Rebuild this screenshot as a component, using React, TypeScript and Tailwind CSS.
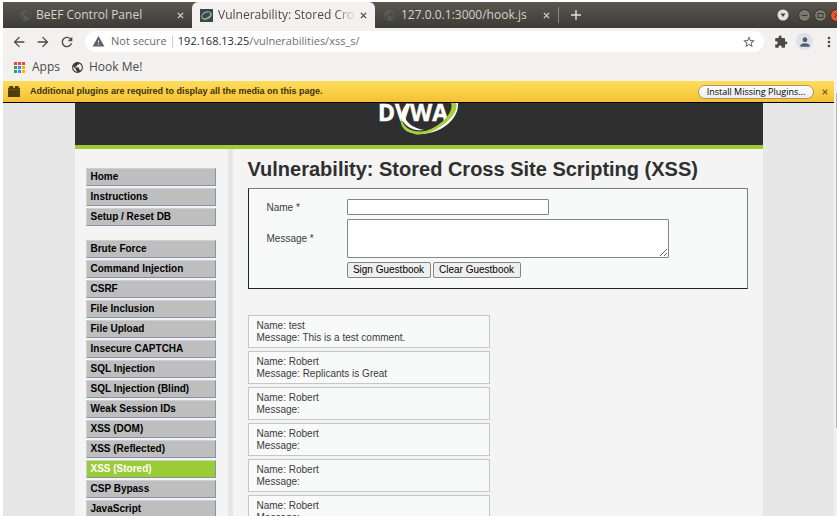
import React from "react";
import { MdArrowBack, MdArrowForward, MdRefresh, MdWarning, MdStarBorder, MdExtension, MdPerson, MdMoreVert, MdPublic } from "react-icons/md";

const menuTop = ["Home", "Instructions", "Setup / Reset DB"];
const menuMain = [
  "Brute Force",
  "Command Injection",
  "CSRF",
  "File Inclusion",
  "File Upload",
  "Insecure CAPTCHA",
  "SQL Injection",
  "SQL Injection (Blind)",
  "Weak Session IDs",
  "XSS (DOM)",
  "XSS (Reflected)",
  "XSS (Stored)",
  "CSP Bypass",
  "JavaScript",
];

const entries = [
  { name: "test", message: "This is a test comment." },
  { name: "Robert", message: "Replicants is Great" },
  { name: "Robert", message: "" },
  { name: "Robert", message: "" },
  { name: "Robert", message: "" },
  { name: "Robert", message: "" },
];

function CloseIcon({ className }: { className: string }) {
  return (
    <svg viewBox="0 0 8 8" className={className} fill="none" stroke="currentColor" strokeWidth="1.5">
      <path d="M1 1l6 6M7 1L1 7" />
    </svg>
  );
}

function TabClose({ label }: { label: string }) {
  return (
    <button type="button" aria-label={label} className="shrink-0">
      <CloseIcon className="size-[7px]" />
    </button>
  );
}

function TabBar() {
  return (
    <div className="flex h-[26px] shrink-0 items-stretch overflow-hidden bg-linear-to-b from-[#59574e] to-[#3d3b36] text-xs text-[#d6d3cc]">
      <div className="flex w-[189px] shrink-0 items-center gap-1 pr-2 pl-4">
        <MdPublic className="size-[13px] shrink-0 text-[#555b62]" />
        <span className="flex-1 truncate">BeEF Control Panel</span>
        <TabClose label="Close BeEF Control Panel" />
      </div>
      <div className="flex w-[183px] shrink-0 items-center gap-1 rounded-t-md bg-[#f2f1f0] pr-2 pl-2 text-[#4a4a4a]">
        <svg viewBox="0 0 12 12" className="size-[13px] shrink-0">
          <rect width="12" height="12" fill="#3c4650" />
          <ellipse cx="6" cy="6" rx="4.6" ry="3" fill="none" stroke="#a9b7a0" strokeWidth="1" transform="rotate(-25 6 6)" />
          <path d="M2 8.5C4 10 9 8.5 10.3 4" fill="none" stroke="#8fbf3a" strokeWidth="1" />
        </svg>
        <span className="min-w-0 flex-1 overflow-hidden mask-r-from-85% pl-px whitespace-nowrap">Vulnerability: Stored Cros</span>
        <TabClose label="Close Vulnerability" />
      </div>
      <div className="flex w-[183px] shrink-0 items-center gap-1 pr-2 pl-2">
        <MdPublic className="size-[13px] shrink-0 text-[#555b62]" />
        <span className="flex-1 truncate pl-px">127.0.0.1:3000/hook.js</span>
        <TabClose label="Close hook.js" />
      </div>
      <div className="flex min-w-0 flex-1 items-center">
        <div className="h-4 w-px bg-[#8b8980]" />
        <button type="button" aria-label="New tab" className="ml-3">
          <svg viewBox="0 0 10 10" className="size-[10px]" stroke="#e4e2dc" strokeWidth="1.4">
            <path d="M5 0v10M0 5h10" />
          </svg>
        </button>
        <div className="-mr-[6px] ml-auto flex items-center gap-[3px]">
          <button type="button" aria-label="Search tabs" className="mr-[6px]">
            <svg viewBox="0 0 12 12" className="size-3">
              <circle cx="6" cy="6" r="5.5" fill="#e4e1da" />
              <path d="M3.5 4.5h5L6 8z" fill="#45433d" />
            </svg>
          </button>
          <button type="button" aria-label="Minimize">
            <svg viewBox="0 0 13 13" className="size-[13px]">
              <circle cx="6.5" cy="6.5" r="6" fill="#7b796f" stroke="#33312c" />
              <path d="M3.5 6.5h6" stroke="#3b3934" />
            </svg>
          </button>
          <button type="button" aria-label="Maximize">
            <svg viewBox="0 0 13 13" className="size-[13px]">
              <circle cx="6.5" cy="6.5" r="6" fill="#7b796f" stroke="#33312c" />
              <rect x="4" y="4.5" width="5" height="4" fill="none" stroke="#3b3934" />
            </svg>
          </button>
          <button type="button" aria-label="Close window">
            <svg viewBox="0 0 13 13" className="size-[13px]">
              <circle cx="6.5" cy="6.5" r="6" fill="#e8582c" stroke="#33312c" />
              <path d="M4.5 4.5l4 4M8.5 4.5l-4 4" stroke="#5e1f0c" />
            </svg>
          </button>
        </div>
      </div>
    </div>
  );
}

function Toolbar() {
  return (
    <div className="flex h-[27px] shrink-0 items-center overflow-hidden pl-2 text-[#4a4a4a]">
      <button type="button" aria-label="Back"><MdArrowBack className="size-4" /></button>
      <button type="button" aria-label="Forward" className="ml-2"><MdArrowForward className="size-4" /></button>
      <button type="button" aria-label="Reload" className="ml-2"><MdRefresh className="size-4" /></button>
      <form className="ml-[10px] flex h-[21px] min-w-0 flex-1 items-center rounded-full bg-white pr-2 pl-[7px] text-[11px]">
        <MdWarning className="size-[13px] shrink-0 text-[#5f6368]" />
        <span className="ml-[6px] shrink-0 text-[#6b6b6b]">Not secure</span>
        <span className="mx-[5px] h-3 w-px shrink-0 bg-[#cfcfcf]" />
        <div className="relative min-w-0 flex-1">
          <input
            aria-label="Address"
            defaultValue="192.168.13.25/vulnerabilities/xss_s/"
            className="block w-full bg-transparent text-[#707070] outline-none"
          />
          <span aria-hidden="true" className="pointer-events-none absolute inset-y-0 left-0 bg-white text-[#2b2b2b]">192.168.13.25</span>
        </div>
        <button type="button" aria-label="Bookmark this page"><MdStarBorder className="size-[14px] text-[#5f6368]" /></button>
      </form>
      <button type="button" aria-label="Extensions" className="ml-[10px]"><MdExtension className="size-[14px]" /></button>
      <button type="button" aria-label="Profile" className="ml-2 flex size-[17px] items-center justify-center rounded-full bg-[#dde1e8]">
        <MdPerson className="size-[14px] text-[#505d75]" />
      </button>
      <button type="button" aria-label="Menu" className="ml-2"><MdMoreVert className="size-4" /></button>
    </div>
  );
}

function AppsIcon() {
  const colors = ["#e8453c", "#e8453c", "#e8453c", "#2fa24f", "#4285f4", "#f5b400", "#2fa24f", "#4285f4", "#f5b400"];
  return (
    <svg viewBox="0 0 11 11" className="size-[11px]">
      {colors.map((c, i) => (
        <rect key={i} x={(i % 3) * 4} y={Math.floor(i / 3) * 4} width="3" height="3" fill={c} />
      ))}
    </svg>
  );
}

function PluginBar() {
  return (
    <div className="flex h-[22px] shrink-0 items-center border-b border-black bg-linear-to-b from-[#fede5a] to-[#f5c034] pr-[6px] pl-[5px]">
      <svg viewBox="0 0 13 12" className="h-[11px] w-3 shrink-0">
        <path d="M1.5 0h4v2h2V0h4v2H13v10H0V2h1.5z" fill="#4f3d10" />
        <path d="M0 4h13" stroke="#8a6d1c" strokeWidth=".6" />
      </svg>
      <p className="ml-[10px] flex-1 truncate font-['Liberation_Sans',sans-serif] text-[9px] font-bold text-[#3d3108]">
        Additional plugins are required to display all the media on this page.
      </p>
      <button type="button" className="h-[14px] w-[116px] shrink-0 rounded-full border border-[#a99868] bg-linear-to-b from-white to-[#ebebeb] text-[9px] leading-3 text-black">
        Install Missing Plugins...
      </button>
      <button type="button" aria-label="Dismiss" className="ml-2 text-[#7a611c]"><CloseIcon className="size-[6px]" /></button>
    </div>
  );
}

function Logo() {
  return (
    <svg viewBox="0 0 84 42" className="h-[42px] w-[84px]" role="img" aria-label="DVWA">
      <path d="M81 3C80 18 62 33 37 31C60 28 74 15 77 0H81z" fill="#fff" />
      <path d="M31 0C24 11 27 23 47 27C34 29 22 20 25 9C26 5 28 2 31 0z" fill="#fff" />
      <text x="1" y="18" fill="#fff" stroke="#fff" strokeWidth=".5" className="font-['Liberation_Sans_Narrow','Open_Sans',sans-serif] text-[23px] font-bold">DVWA</text>
      <path d="M24 15C21 30 42 36 58 27C73 19 82 8 79 0H74C77 8 67 20 54 26C39 32 27 27 24 15z" fill="#a6cf3c" />
    </svg>
  );
}

function MenuItem({ label }: { label: string }) {
  const active = label === "XSS (Stored)";
  return (
    <li>
      <a
        href="#"
        className={
          "block h-[18px] border border-t-[#ccd0d6] border-r-[#8790a4] border-b-[#8790a4] border-l-[#ccd0d6] pl-1 leading-4 font-bold " +
          (active ? "bg-[#9acc33] text-white" : "bg-[#bebebe] text-black")
        }
      >
        {label}
      </a>
    </li>
  );
}

export default function App() {
  return (
    <div className="flex h-screen flex-col overflow-hidden bg-white pt-[2px] pl-[3px] font-['Open_Sans','Noto_Sans',sans-serif]">
      <TabBar />
      <div className="shrink-0 bg-[#f2f1f0]">
        <Toolbar />
        <nav className="flex h-[26px] items-center pb-[2px] pl-[11px] text-xs text-[#4a4a4a]">
          <a href="#" className="flex items-center gap-[7px]"><AppsIcon />Apps</a>
          <a href="#" className="ml-[11px] flex items-center gap-[5px]"><MdPublic className="size-[13px] text-[#3c3c3c]" />Hook Me!</a>
        </nav>
      </div>
      <div className="flex min-h-0 flex-1">
        <div className="flex min-w-0 flex-1 flex-col">
          <PluginBar />
          <div className="min-h-0 flex-1 overflow-hidden bg-[#e7e7e7] font-['Liberation_Sans',sans-serif] text-[10px] text-[#3a3a3a]">
            <div className="mx-auto w-[688px] max-w-full bg-[#f4f4f4]">
              <header className="flex h-[46px] justify-center border-b-4 border-[#9fcb32] bg-[#2f2f2f]">
                <Logo />
              </header>
              <div className="flex">
                <nav className="w-[158px] shrink-0 border-r-5 border-[#e7e7e7] pt-[19px] pr-3 pl-[11px]">
                  <ul className="flex flex-col gap-[2px]">
                    {menuTop.map((m) => <MenuItem key={m} label={m} />)}
                  </ul>
                  <ul className="mt-[14px] flex flex-col gap-[2px]">
                    {menuMain.map((m) => <MenuItem key={m} label={m} />)}
                  </ul>
                </nav>
                <main className="min-w-0 flex-1 px-[15px] pt-2">
                  <h1 className="text-[20px] leading-6 font-bold whitespace-nowrap text-[#2f2f2f]">
                    Vulnerability: Stored Cross Site Scripting (XSS)
                  </h1>
                  <form className="mt-[7px] grid grid-cols-[80px_1fr] items-center gap-y-1 border border-t-[#7c7c7c] border-r-[#7c7c7c] border-b-[#222] border-l-[#222] bg-[#f8faf9] pt-[10px] pb-[10px] pl-[18px]">
                    <label htmlFor="name">Name *</label>
                    <input id="name" className="h-4 w-[202px] rounded-[1px] border border-[#858585] bg-white px-1" />
                    <label htmlFor="message">Message *</label>
                    <textarea id="message" className="block h-[39px] w-[322px] rounded-[1px] border border-[#858585] bg-white px-1" />
                    <div className="col-start-2 flex gap-[2px] text-black">
                      <button type="button" className="h-4 w-[84px] rounded-[2px] border border-[#858585] bg-[#efefef] leading-[14px]">Sign Guestbook</button>
                      <button type="button" className="h-4 w-[88px] rounded-[2px] border border-[#858585] bg-[#efefef] leading-[14px]">Clear Guestbook</button>
                    </div>
                  </form>
                  <div className="mt-[26px] flex w-[242px] flex-col gap-[3px]">
                    {entries.map((e, i) => (
                      <div key={i} className="h-[33px] border border-[#c6c6c6] bg-[#f8faf9] px-2 pt-1 leading-3">
                        <p>Name: {e.name}</p>
                        <p>Message: {e.message}</p>
                      </div>
                    ))}
                  </div>
                </main>
              </div>
            </div>
          </div>
        </div>
        <div className="w-[3px] shrink-0 bg-[#f2f1f0] pt-3">
          <div className="ml-[2px] h-[335px] bg-[#b4b4b4]" />
        </div>
      </div>
    </div>
  );
}
